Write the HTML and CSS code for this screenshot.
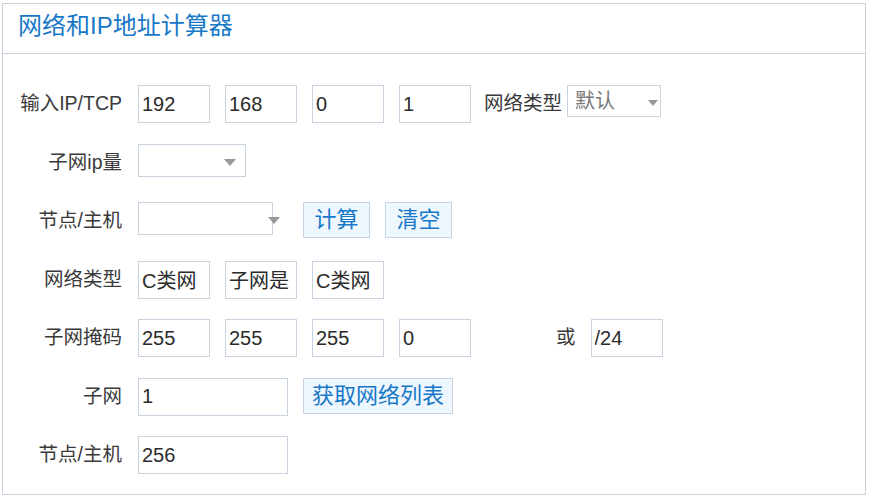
FILE: index.html
```html
<!DOCTYPE html>
<html lang="zh-CN">
<head>
<meta charset="utf-8">
<title>网络和IP地址计算器</title>
<link rel="stylesheet" href="styles.css">
</head>
<body>
<div class="panel">
  <div class="panel-head">网络和IP地址计算器</div>
  <div class="form">
    <div class="row">
      <label class="label">输入IP/TCP</label>
      <div class="group">
        <input class="inp" type="text" value="192">
        <input class="inp" type="text" value="168">
        <input class="inp" type="text" value="0">
        <input class="inp" type="text" value="1">
      </div>
      <span class="ilabel">网络类型</span>
      <div class="sel sel-type">默认</div>
    </div>
    <div class="row">
      <label class="label">子网ip量</label>
      <div class="sel sel-count"></div>
    </div>
    <div class="row">
      <label class="label">节点/主机</label>
      <div class="sel sel-host"></div>
      <div class="btns">
        <button class="btn btn-sm" type="button">计算</button>
        <button class="btn btn-sm" type="button">清空</button>
      </div>
    </div>
    <div class="row">
      <label class="label">网络类型</label>
      <div class="group">
        <input class="inp" type="text" value="C类网">
        <input class="inp" type="text" value="子网是">
        <input class="inp" type="text" value="C类网">
      </div>
    </div>
    <div class="row">
      <label class="label">子网掩码</label>
      <div class="group">
        <input class="inp" type="text" value="255">
        <input class="inp" type="text" value="255">
        <input class="inp" type="text" value="255">
        <input class="inp" type="text" value="0">
      </div>
      <span class="or">或</span>
      <input class="inp" type="text" value="/24">
    </div>
    <div class="row">
      <label class="label">子网</label>
      <input class="inp inp-wide" type="text" value="1">
      <button class="btn btn-lg" type="button">获取网络列表</button>
    </div>
    <div class="row">
      <label class="label">节点/主机</label>
      <input class="inp inp-wide" type="text" value="256">
    </div>
  </div>
</div>
</body>
</html>
```
FILE: styles.css
```css
* { box-sizing: border-box; }
html, body { margin: 0; padding: 0; background: #fff; }
body {
  font-family: "Liberation Sans", "Noto Sans CJK SC", sans-serif;
  color: #333;
}
.panel {
  margin: 3px 0 0 2px;
  width: 864px;
  height: 492px;
  border: 1px solid #c9d0dc;
}
.panel-head {
  height: 50px;
  border-bottom: 1px solid #c9d0dc;
  padding-left: 15px;
  font-size: 24px;
  line-height: 44px;
  color: #1878c8;
}
.form { padding-top: 31px; }
.row {
  display: flex;
  align-items: flex-start;
  height: 38px;
  margin-bottom: 20.5px;
}
.label {
  width: 119px;
  margin-right: 16px;
  text-align: right;
  font-size: 19.5px;
  line-height: 36px;
  color: #3a3a3a;
}
.group { display: flex; gap: 15px; }
.inp {
  width: 72px;
  height: 38px;
  margin: 0;
  border: 1px solid #c9d2df;
  border-radius: 0;
  padding: 0 3px;
  font-family: "Liberation Sans", "Noto Sans CJK SC", sans-serif;
  font-size: 20px;
  color: #2b2b2b;
  background: #fff;
  outline: none;
}
.inp-wide { width: 150px; }
.ilabel {
  margin-left: 13px;
  font-size: 19.5px;
  line-height: 36px;
  color: #3a3a3a;
}
.or {
  margin: 0 15px 0 85px;
  font-size: 19.5px;
  line-height: 36px;
  color: #3a3a3a;
}
.sel {
  position: relative;
  border: 1px solid #c9d2df;
  background: #fff;
  font-size: 20px;
  color: #777;
}
.sel::after {
  content: "";
  position: absolute;
  width: 0;
  height: 0;
  border-left: 6px solid transparent;
  border-right: 6px solid transparent;
  border-top: 7px solid #999;
}
.sel-type {
  margin-left: 5px;
  width: 94px;
  height: 32px;
  padding-left: 7px;
  line-height: 31px;
}
.sel-type::after { right: 2px; top: 14px; border-left-width: 5.5px; border-right-width: 5.5px; border-top-width: 6px; }
.sel-count { width: 108px; height: 33px; }
.sel-count::after { right: 9px; top: 14px; }
.sel-host { width: 135px; height: 33px; }
.sel-host::after { right: -8px; top: 14px; }
.btns { display: flex; gap: 15px; margin-left: 30px; }
.btn {
  height: 36px;
  margin: 0;
  padding: 0;
  border: 1px solid #c5d2e2;
  border-radius: 0;
  background: #eef6fe;
  color: #1878c8;
  font-family: "Liberation Sans", "Noto Sans CJK SC", sans-serif;
  font-size: 22px;
  line-height: 34px;
  cursor: pointer;
}
.btn-sm { width: 67px; }
.btn-lg { width: 150px; margin-left: 15px; }
```
